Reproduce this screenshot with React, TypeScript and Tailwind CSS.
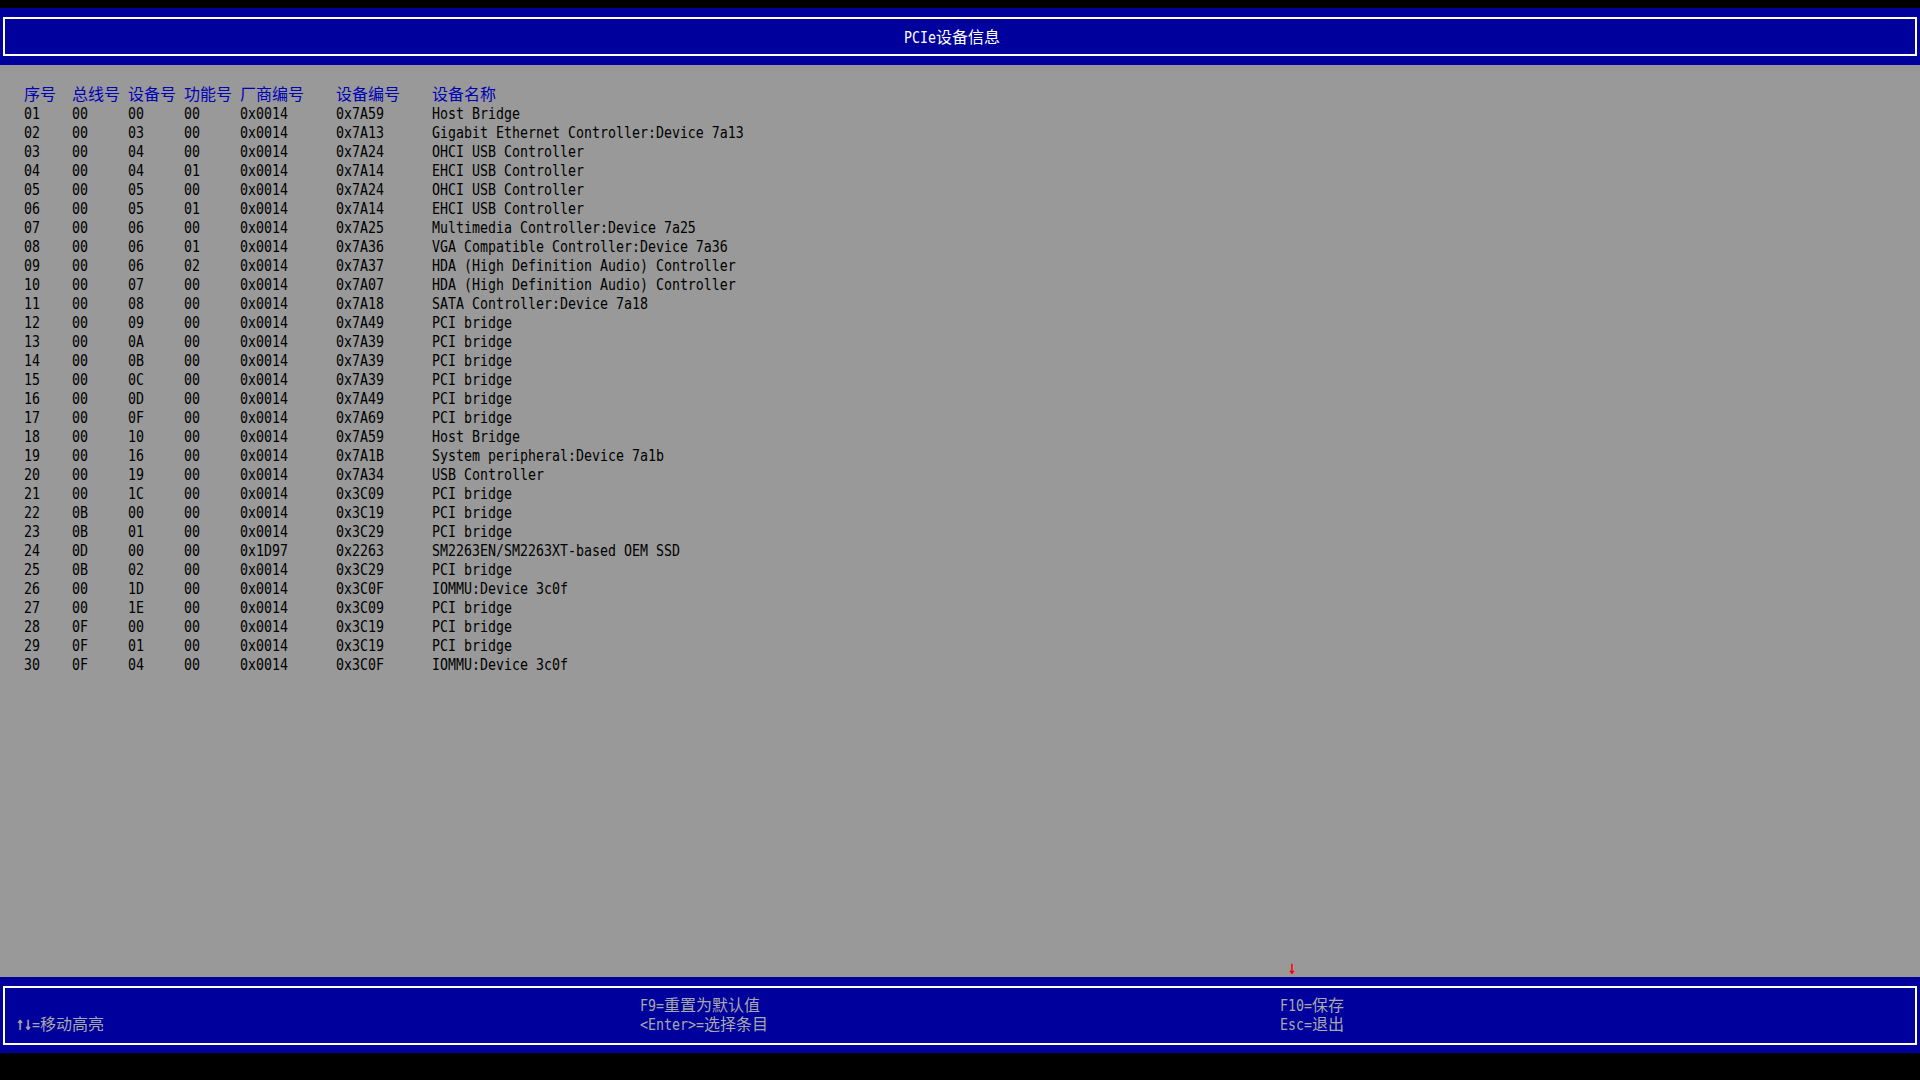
import React from "react";

type Row = [string, string, string, string, string, string, string];

const rows: Row[] = [
  ["01", "00", "00", "00", "0x0014", "0x7A59", "Host Bridge"],
  ["02", "00", "03", "00", "0x0014", "0x7A13", "Gigabit Ethernet Controller:Device 7a13"],
  ["03", "00", "04", "00", "0x0014", "0x7A24", "OHCI USB Controller"],
  ["04", "00", "04", "01", "0x0014", "0x7A14", "EHCI USB Controller"],
  ["05", "00", "05", "00", "0x0014", "0x7A24", "OHCI USB Controller"],
  ["06", "00", "05", "01", "0x0014", "0x7A14", "EHCI USB Controller"],
  ["07", "00", "06", "00", "0x0014", "0x7A25", "Multimedia Controller:Device 7a25"],
  ["08", "00", "06", "01", "0x0014", "0x7A36", "VGA Compatible Controller:Device 7a36"],
  ["09", "00", "06", "02", "0x0014", "0x7A37", "HDA (High Definition Audio) Controller"],
  ["10", "00", "07", "00", "0x0014", "0x7A07", "HDA (High Definition Audio) Controller"],
  ["11", "00", "08", "00", "0x0014", "0x7A18", "SATA Controller:Device 7a18"],
  ["12", "00", "09", "00", "0x0014", "0x7A49", "PCI bridge"],
  ["13", "00", "0A", "00", "0x0014", "0x7A39", "PCI bridge"],
  ["14", "00", "0B", "00", "0x0014", "0x7A39", "PCI bridge"],
  ["15", "00", "0C", "00", "0x0014", "0x7A39", "PCI bridge"],
  ["16", "00", "0D", "00", "0x0014", "0x7A49", "PCI bridge"],
  ["17", "00", "0F", "00", "0x0014", "0x7A69", "PCI bridge"],
  ["18", "00", "10", "00", "0x0014", "0x7A59", "Host Bridge"],
  ["19", "00", "16", "00", "0x0014", "0x7A1B", "System peripheral:Device 7a1b"],
  ["20", "00", "19", "00", "0x0014", "0x7A34", "USB Controller"],
  ["21", "00", "1C", "00", "0x0014", "0x3C09", "PCI bridge"],
  ["22", "0B", "00", "00", "0x0014", "0x3C19", "PCI bridge"],
  ["23", "0B", "01", "00", "0x0014", "0x3C29", "PCI bridge"],
  ["24", "0D", "00", "00", "0x1D97", "0x2263", "SM2263EN/SM2263XT-based OEM SSD"],
  ["25", "0B", "02", "00", "0x0014", "0x3C29", "PCI bridge"],
  ["26", "00", "1D", "00", "0x0014", "0x3C0F", "IOMMU:Device 3c0f"],
  ["27", "00", "1E", "00", "0x0014", "0x3C09", "PCI bridge"],
  ["28", "0F", "00", "00", "0x0014", "0x3C19", "PCI bridge"],
  ["29", "0F", "01", "00", "0x0014", "0x3C19", "PCI bridge"],
  ["30", "0F", "04", "00", "0x0014", "0x3C0F", "IOMMU:Device 3c0f"],
];

const headers = ["序号", "总线号", "设备号", "功能号", "厂商编号", "设备编号", "设备名称"];

// latin glyphs sit in 8px cells and are stretched to look like the bios bitmap font
function Lat({ children }: { children: React.ReactNode }) {
  return (
    <span className="inline-block h-[19px] translate-y-px scale-y-[1.2] align-top whitespace-pre font-[family-name:'DejaVu_Sans_Mono','Liberation_Mono',monospace] text-[13.29px] leading-[19px]">
      {children}
    </span>
  );
}

// arrow glyphs are drawn heavier and taller in the bios font
function Arrow({ children }: { children: React.ReactNode }) {
  return (
    <span className="inline-block h-[19px] scale-y-[1.45] align-top whitespace-pre font-[family-name:'DejaVu_Sans_Mono','Liberation_Mono',monospace] text-[13.29px] font-bold leading-[19px]">
      {children}
    </span>
  );
}

function Cjk({ children }: { children: React.ReactNode }) {
  return (
    <span className="inline-block h-[19px] align-top whitespace-pre font-[family-name:'Noto_Sans_CJK_SC','Noto_Sans_CJK_JP',sans-serif] text-[16px] leading-[19px]">
      {children}
    </span>
  );
}

// split a string into cjk / latin runs
function Txt({ s }: { s: string }) {
  const parts = s.match(/[\u3000-\u9fff\uff00-\uffef]+|[^\u3000-\u9fff\uff00-\uffef]+/g) ?? [];
  return (
    <>
      {parts.map((p, i) =>
        /[\u3000-\u9fff\uff00-\uffef]/.test(p) ? (
          <Cjk key={i}>{p}</Cjk>
        ) : (
          <Lat key={i}>{p}</Lat>
        )
      )}
    </>
  );
}

function Line({ s, className = "" }: { s?: string; className?: string }) {
  return (
    <div className={`flex h-[19px] whitespace-nowrap ${className}`}>
      {s ? <Txt s={s} /> : null}
    </div>
  );
}

export default function App() {
  return (
    <div className="flex h-[1080px] w-[1920px] flex-col overflow-hidden bg-black pt-[8px]">
      {/* title bar */}
      <div className="h-[57px] bg-[#00009c] px-[3px] pt-[9px]">
        <div className="flex h-[39px] items-center justify-center border-2 border-white pr-[16px] text-white">
          <Line s="PCIe设备信息" />
        </div>
      </div>

      {/* content */}
      <div className="flex h-[912px] flex-col bg-[#999999] pt-[19px]">
        <div className="grid grid-cols-[48px_56px_56px_56px_96px_96px_1fr] pl-[24px]">
          {headers.map((h) => (
            <Line key={h} s={h} className="text-[#0000b8]" />
          ))}
          {rows.map((r) =>
            r.map((c, i) => <Line key={r[0] + "-" + i} s={c} className="text-black" />)
          )}
        </div>
        <div className="mt-auto flex h-[19px] pl-[1288px] text-[#ff0000]">
          <Arrow>↓</Arrow>
        </div>
      </div>

      {/* help bar */}
      <div className="h-[76px] bg-[#00009c] px-[3px] pt-[9px]">
        <div className="h-[59px] border-2 border-white pl-[11px] pt-[7px] text-[#a8a8a8]">
          <div className="grid grid-cols-[624px_640px_1fr]">
            <div className="flex flex-col">
              <Line />
              <div className="flex h-[19px] whitespace-nowrap">
                <Arrow>↑↓</Arrow>
                <Txt s="=移动高亮" />
              </div>
            </div>
            <div className="flex flex-col">
              <Line s="F9=重置为默认值" />
              <Line s="<Enter>=选择条目" />
            </div>
            <div className="flex flex-col">
              <Line s="F10=保存" />
              <Line s="Esc=退出" />
            </div>
          </div>
        </div>
      </div>
    </div>
  );
}
